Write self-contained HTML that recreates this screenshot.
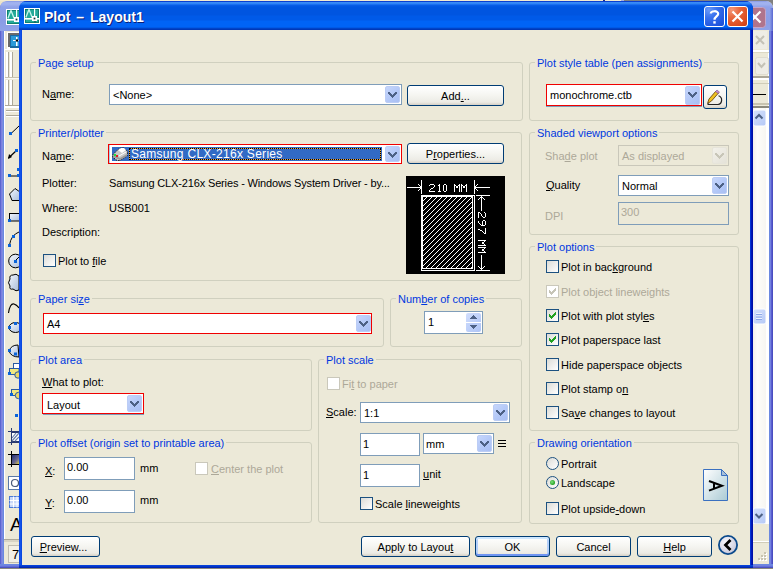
<!DOCTYPE html>
<html><head><meta charset="utf-8">
<style>
*{box-sizing:border-box}
html,body{margin:0;padding:0}
body{width:773px;height:569px;overflow:hidden;position:relative;background:#ede4c8;font-family:"Liberation Sans",sans-serif;font-size:11px;line-height:13px;color:#000}
.a{position:absolute}
.t{position:absolute;white-space:pre;line-height:13px}
.dis{color:#aca899}
.gb{position:absolute;border:1px solid #d0d0bf;border-radius:3px}
.gt{position:absolute;white-space:pre;color:#0038e0;background:#ece9d8;padding:0 2px;line-height:13px}
.combo{position:absolute;background:#fff;border:1px solid #7f9db9}
.combo.red{border:1px solid #f00000}
.dd{position:absolute;top:1px;right:1px;bottom:1px;width:15px;border-radius:2px;background:linear-gradient(135deg,#c6d6fc 0%,#b2c7f7 60%,#a9bff3 100%);border:1px solid #bccdf5}
.dd svg{position:absolute;left:2px;top:5px}
.inp{position:absolute;background:#fff;border:1px solid #7f9db9}
.btn{position:absolute;border:1px solid #003c74;border-radius:3px;background:linear-gradient(#ffffff 0%,#f6f6f2 45%,#ecebe5 85%,#d6d0c5 100%);text-align:center;white-space:pre}
.cb{position:absolute;width:13px;height:13px;border:1px solid #1c5180;background:linear-gradient(135deg,#dcdcd7 0%,#f1f1ef 60%,#fff 100%)}
.cb.dis{border-color:#cac8bb;background:#fff}
.u{text-decoration:underline}
.dd.ddd{background:linear-gradient(135deg,#f2f1ea,#e4e2d8);border-color:#e6e4da}

.rad{position:absolute;width:13px;height:13px;border-radius:50%;border:1px solid #1c5180;background:linear-gradient(135deg,#dcdcd7 0%,#f1f1ef 60%,#fff 100%)}
.rad.on:after{content:"";position:absolute;left:3px;top:3px;width:5px;height:5px;border-radius:50%;background:radial-gradient(circle at 40% 40%,#7ee07e,#21a121 70%)}
.btn.def{box-shadow:inset 0 -2px 0 #6f95f2, inset 0 2px 0 #cee7ff, inset 2px 0 0 #b4d0fa, inset -2px 0 0 #b4d0fa}

</style></head>
<body>
<!-- background app window -->
<div class="a" style="left:0;top:0;width:773px;height:1px;background:linear-gradient(90deg,#f2ead0 0,#f2ead0 603px,#1a2a90 603px,#1a2a90 605px,#f2ead0 605px,#f2ead0 621px,#a8b0e0 621px,#a8b0e0 624px,#808080 624px)"></div>
<div class="a" style="left:624px;top:0;width:149px;height:14px;background:#808080"></div>
<div class="a" style="left:0;top:1px;width:773px;height:567px;border-radius:7px 7px 0 0;background:linear-gradient(90deg,#5a66d0 0,#5a66d0 1px,#7b7fe0 1px,#7b7fe0 2px,#7a8de0 2px,#7a8de0 3px,#6a88e0 3px,#6a88e0 4px,#fff 4px,#fff 5px,#ece9d8 5px)"></div>
<div class="a" style="left:0;top:1px;width:773px;height:30px;border-radius:7px 7px 0 0;background:linear-gradient(#7d8fe0 0,#9fb0ee 1px,#a2b3ef 3px,#90a2e8 6px,#8a9de6 20px,#8fa2e8 29px)"></div>
<div class="a" style="left:768px;top:31px;width:1px;height:533px;background:#fff"></div><div class="a" style="left:770px;top:8px;width:3px;height:23px;background:linear-gradient(90deg,#8a9ce6,#6a7ad8 2px,#5a66d0)"></div><div class="a" style="left:769px;top:31px;width:4px;height:537px;background:linear-gradient(90deg,#6a88e0 0,#6a88e0 1px,#7382e0 1px,#7382e0 2px,#5a5ed0 2px,#5a5ed0 3px,#4a4ec0 3px)"></div>
<div class="a" style="left:0;top:564px;width:773px;height:4px;background:linear-gradient(#6a88e0 0,#6a88e0 1px,#7080e0 1px,#7080e0 2px,#6070d8 2px,#6070d8 3px,#4a50c0 3px)"></div>
<div class="a" style="left:5px;top:31px;width:763px;height:533px;background:#ece9d8"></div><div class="a" style="left:4px;top:31px;width:1px;height:511px;background:#fff"></div>
<div class="a" style="left:0;top:568px;width:773px;height:1px;background:#8a8a80"></div>

<svg class="a" style="left:0;top:0" width="19" height="569" viewBox="0 0 19 569">
<defs>
<linearGradient id="pg" x1="0" y1="0" x2="1" y2="1"><stop offset="0" stop-color="#f4f8ff"/><stop offset="1" stop-color="#a8bcd8"/></linearGradient>
<linearGradient id="gr" x1="0" y1="0" x2="1" y2="1"><stop offset="0" stop-color="#202a70"/><stop offset="0.6" stop-color="#6a6a90"/><stop offset="1" stop-color="#e8d040"/></linearGradient>
</defs>
<!-- bg window title icon -->
<g transform="translate(0,1)"><rect x="6" y="8" width="16" height="16" fill="#fff"/>
<rect x="7" y="9" width="14" height="14" fill="#0f7f70"/>
<rect x="8" y="10" width="12" height="12" fill="#24aa98"/>
<polyline points="7.8,17.5 11,9.5 14.2,17.5" fill="none" stroke="#c8f4ec" stroke-width="1.3"/>
<rect x="16" y="9" width="1.2" height="8.5" fill="#fff"/>
<rect x="7" y="18" width="14" height="1.6" fill="#fff"/>
<rect x="14" y="16" width="5" height="5" fill="#fff"/>
<rect x="15.6" y="17.6" width="1.8" height="1.8" fill="#1a3a3a"/></g>
<!-- toolbar top icon -->
<rect x="7" y="32" width="12" height="17" fill="#fff"/>
<rect x="8" y="33" width="11" height="14" fill="#6a6a6a"/>
<rect x="10" y="35" width="9" height="13" fill="#1a6aa0"/>
<rect x="11" y="36" width="8" height="10" fill="#2a9ad8"/>
<rect x="13" y="40" width="6" height="1" fill="#fff"/>
<rect x="16" y="37" width="1.5" height="9" fill="#fff"/>
<circle cx="17" cy="40.5" r="1.2" fill="#000"/>
<rect x="4" y="49" width="15" height="1" fill="#fff"/>
<!-- grips -->
<g fill="#fff"><rect x="6" y="52" width="2" height="25"/><rect x="10" y="52" width="2" height="25"/><rect x="6" y="80" width="2" height="25"/><rect x="10" y="80" width="2" height="25"/></g>
<g fill="#aca899"><rect x="8" y="52" width="1" height="25"/><rect x="12" y="52" width="1" height="25"/><rect x="8" y="80" width="1" height="25"/><rect x="12" y="80" width="1" height="25"/></g>
<rect x="5" y="77" width="14" height="1" fill="#c8c4b0"/><rect x="5" y="78" width="14" height="1" fill="#f8f8f4"/>
<rect x="5" y="105" width="14" height="1" fill="#aca899"/>
<rect x="5" y="106" width="14" height="2" fill="#fff"/>
<rect x="6" y="110" width="13" height="1" fill="#aca899"/>
<rect x="6" y="111" width="13" height="1" fill="#fff"/>
<rect x="6" y="115" width="13" height="1" fill="#aca899"/>
<rect x="6" y="116" width="13" height="1" fill="#fff"/>
<!-- line -->
<line x1="10.5" y1="134" x2="19" y2="126" stroke="#000" stroke-width="1"/>
<rect x="9" y="132" width="3" height="3" fill="#0a64d8"/>
<!-- ray -->
<line x1="8.5" y1="158" x2="17" y2="150" stroke="#000" stroke-width="1.2"/>
<path d="M8,159 L9,154 L12,157 Z" fill="#000"/>
<rect x="15" y="149" width="3" height="3" fill="#0a64d8"/>
<!-- xline -->
<line x1="9" y1="176" x2="19" y2="176" stroke="#000"/>
<rect x="8" y="174" width="3" height="3" fill="#0a64d8"/>
<rect x="17" y="174" width="3" height="3" fill="#0a64d8"/>
<rect x="17" y="168" width="3" height="3" fill="#0a64d8"/>
<!-- polygon -->
<path d="M9.5,194 L15,188.5 L20,192 L20,200.5 L12,200.5 Z" fill="url(#pg)" stroke="#000"/>
<!-- rectangle -->
<rect x="9.5" y="213.5" width="11" height="7.5" fill="url(#pg)" stroke="#000"/>
<rect x="8" y="219" width="3" height="3" fill="#0a64d8"/>
<!-- arc -->
<path d="M9.5,245 Q11,235 19,232" fill="none" stroke="#000"/>
<rect x="8" y="244" width="3" height="3" fill="#0a64d8"/>
<rect x="12" y="235" width="3" height="3" fill="#0a64d8"/>
<!-- circle -->
<circle cx="15.5" cy="261" r="6.8" fill="url(#pg)" stroke="#000"/>
<line x1="15" y1="261" x2="19" y2="257" stroke="#000"/>
<rect x="14" y="260" width="3" height="3" fill="#0a64d8"/>
<!-- cloud -->
<path d="M10,279 Q9,275 13,275 Q16,273 19,276 L19,290 Q16,292 13,289 Q9,290 10,286 Q7,283 10,279 Z" fill="url(#pg)" stroke="#000"/>
<!-- spline -->
<path d="M8.5,313 Q10,303 14,304 Q17,305 19,308" fill="none" stroke="#000" stroke-width="1.1"/>
<!-- ellipse -->
<ellipse cx="15.5" cy="327.5" rx="6.5" ry="5" fill="url(#pg)" stroke="#000"/>
<rect x="8" y="326" width="3" height="3" fill="#0a64d8"/>
<rect x="14" y="322" width="3" height="3" fill="#0a64d8"/>
<!-- ellipse arc -->
<path d="M9,351 Q11,345 18,345 L19,357 Q11,357 9,351 Z" fill="url(#pg)" stroke="#000"/>
<rect x="8" y="349" width="3" height="3" fill="#0a64d8"/>
<rect x="14" y="352.5" width="3" height="3" fill="#0a64d8"/>
<!-- insert block -->
<rect x="13.5" y="363.5" width="6" height="6" fill="#fff" stroke="#2a5aa0"/>
<path d="M9.5,368.5 L19,368.5 L19,374 L14,374 Z" fill="#e8e070" stroke="#2a5aa0"/>
<rect x="9.5" y="368.5" width="9.5" height="6" fill="#f0e880" stroke="#2a5aa0"/>
<circle cx="18" cy="375" r="3.2" fill="#e8d868" stroke="#2a5aa0"/>
<rect x="8" y="372" width="3" height="3" fill="#0a64d8"/>
<!-- make block -->
<rect x="11.5" y="389.5" width="8" height="6" fill="#f0e880" stroke="#2a5aa0"/>
<circle cx="18.5" cy="395.5" r="3.2" fill="#e8d868" stroke="#2a5aa0"/>
<rect x="10" y="393" width="3" height="3" fill="#0a64d8"/>
<!-- point -->
<rect x="15" y="414" width="3" height="3" fill="#0a64d8"/>
<!-- hatch -->
<rect x="11.5" y="432.5" width="8" height="9" fill="#fff" stroke="#2a3a70"/>
<path d="M12,438 L16,433 M12,441 L19,433 M15,441 L19,437" stroke="#6a80a8" stroke-width="1.2"/>
<line x1="8" y1="431.5" x2="19" y2="431.5" stroke="#2a3a70"/><line x1="8" y1="442.5" x2="19" y2="442.5" stroke="#2a3a70"/>
<line x1="11.5" y1="428" x2="11.5" y2="445" stroke="#2a3a70"/>
<!-- gradient -->
<rect x="11.5" y="455" width="8" height="9" fill="url(#gr)"/>
<line x1="8" y1="454.5" x2="19" y2="454.5" stroke="#000"/><line x1="8" y1="464.5" x2="19" y2="464.5" stroke="#000"/>
<line x1="11.5" y1="451" x2="11.5" y2="467" stroke="#000"/>
<!-- region -->
<rect x="8.5" y="476.5" width="11" height="13" fill="#fff" stroke="#5a7aa8"/>
<circle cx="15" cy="483" r="3.5" fill="none" stroke="#4a5a7a" stroke-width="1.2"/>
<!-- table -->
<rect x="9.5" y="496.5" width="10" height="11" fill="#c8d8f8" stroke="#4a7ad8"/>
<path d="M9.5,500.5 H19 M9.5,504 H19 M13.5,496.5 V507.5 M17,496.5 V507.5" stroke="#fff"/>
<!-- A -->
<text x="10" y="531" font-family="Liberation Sans" font-size="19" fill="#000">A</text>
<!-- status separator -->
<rect x="4" y="539" width="15" height="1" fill="#aca899"/>
<rect x="4" y="540" width="15" height="2" fill="#d8d4c4"/>
<rect x="4" y="542" width="15" height="22" fill="#ece9d8"/>
<rect x="8.5" y="545.5" width="11" height="17" fill="#f2f0e6" stroke="#c0bdb0"/>
<text x="12" y="559" font-family="Liberation Sans" font-size="13" fill="#000">7</text>
</svg>
<svg class="a" style="left:740px;top:0" width="29" height="569" viewBox="740 0 29 569">
<defs>
<linearGradient id="sb" x1="0" y1="0" x2="1" y2="0"><stop offset="0" stop-color="#f3f1ec"/><stop offset="0.3" stop-color="#fefefb"/><stop offset="1" stop-color="#f6f5f0"/></linearGradient>
<linearGradient id="sbb" x1="0" y1="0" x2="1" y2="1"><stop offset="0" stop-color="#d6e2fc"/><stop offset="1" stop-color="#b4c8f6"/></linearGradient>
</defs>
<!-- bg close button -->
<rect x="744.5" y="7.5" width="21" height="20" rx="3" fill="#b0748c" stroke="#c4a4c8"/>
<path d="M749.5,11.5 L760.5,22.5 M760.5,11.5 L749.5,22.5" stroke="#fff" stroke-width="2.2"/>
<!-- toolbar stuff -->
<rect x="753" y="30" width="16" height="20" fill="#ece9d8"/>
<rect x="753" y="31" width="14" height="18" fill="#eeede5"/>
<path d="M756,36 L764,44 M764,36 L756,44" stroke="#c4c2b6" stroke-width="2"/>
<rect x="753" y="50" width="16" height="2" fill="#fff"/>
<rect x="753" y="52" width="16" height="1" fill="#dcd8c4"/>
<rect x="755.5" y="57.5" width="13" height="17" rx="2" fill="#eeede6" stroke="#dedcd0"/>
<path d="M758,63 L761.5,67 L765,63" fill="none" stroke="#c4c2b6" stroke-width="2"/>
<rect x="753" y="76" width="16" height="2" fill="#aca899"/>
<rect x="753" y="78" width="16" height="2" fill="#fff"/>
<rect x="753" y="83" width="16" height="1" fill="#d0ccb8"/>
<rect x="753" y="94" width="13" height="1" fill="#000"/>
<rect x="753" y="103" width="16" height="2" fill="#c8c4b0"/>
<rect x="753" y="106" width="16" height="2" fill="#8c8a7c"/>
<!-- scrollbar -->
<rect x="753" y="108" width="14" height="416" fill="url(#sb)"/>
<rect x="766" y="108" width="3" height="416" fill="#fff"/>
<rect x="753" y="110" width="13" height="16" rx="2" fill="url(#sbb)" stroke="#fff" stroke-width="1"/>
<path d="M755.5,118.5 L759,115 L762.5,118.5" fill="none" stroke="#4d6185" stroke-width="2"/>
<rect x="753" y="309" width="13" height="15" rx="2" fill="url(#sbb)" stroke="#fff" stroke-width="1"/>
<path d="M756,313.5 H762 M756,316 H762 M756,318.5 H762" stroke="#eef2fd" stroke-width="1"/>
<path d="M756,314.5 H762 M756,317 H762 M756,319.5 H762" stroke="#8ca8e8" stroke-width="1"/>
<rect x="753" y="508" width="13" height="16" rx="2" fill="url(#sbb)" stroke="#fff" stroke-width="1"/>
<path d="M755.5,514 L759,517.5 L762.5,514" fill="none" stroke="#4d6185" stroke-width="2"/>
<!-- below -->
<rect x="753" y="524" width="16" height="17" fill="#ece9d8"/>
<rect x="753" y="541" width="16" height="1" fill="#fff"/>
<rect x="753" y="542" width="16" height="1" fill="#d0ccb8"/>
<rect x="753" y="543" width="16" height="21" fill="#ece9d8"/>
<g fill="#fff"><rect x="765" y="553" width="2" height="2"/><rect x="762" y="556" width="2" height="2"/><rect x="765" y="556" width="2" height="2"/><rect x="759" y="559" width="2" height="2"/><rect x="762" y="559" width="2" height="2"/><rect x="765" y="559" width="2" height="2"/></g>
<g fill="#c8c4b0"><rect x="764" y="552" width="2" height="2"/><rect x="761" y="555" width="2" height="2"/><rect x="764" y="555" width="2" height="2"/><rect x="758" y="558" width="2" height="2"/><rect x="761" y="558" width="2" height="2"/><rect x="764" y="558" width="2" height="2"/></g>
</svg>
<!-- dialog frame -->
<div class="a" style="left:19px;top:1px;width:734px;height:567px;border-radius:8px 8px 0 0;background:linear-gradient(90deg,#0a3fd8 0,#1a5cf4 1px,#0a48e0 2px,#0a48e0 731px,#0022c8 732px,#0010a8 733px)"></div>
<div class="a" style="left:19px;top:1px;width:734px;height:29px;border-radius:8px 8px 0 0;background:linear-gradient(#0a3fd0 0,#0a3fd0 1px,#3d8ff5 1px,#2b80f8 3px,#0a5fe8 4px,#0055e0 6px,#0055e0 14px,#005ae8 15px,#005ae8 19px,#0064f6 20px,#0064f6 26px,#0050d8 27px,#0038b8 28px)"></div>
<div class="a" style="left:19px;top:565px;width:734px;height:3px;background:linear-gradient(#0a48e0,#0030c0 2px,#0018a8)"></div>
<div class="a" style="left:22px;top:30px;width:728px;height:535px;background:#ece9d8"></div>

<svg class="a" style="left:24px;top:8px" width="16" height="16" viewBox="0 0 16 16">
<rect x="0" y="0" width="16" height="16" fill="#fff"/>
<rect x="1" y="1" width="14" height="14" fill="#0f7f70"/>
<rect x="2" y="2" width="12" height="12" fill="#24aa98"/>
<polyline points="1.8,9.5 5,1.5 8.2,9.5" fill="none" stroke="#c8f4ec" stroke-width="1.3"/>
<rect x="10" y="1" width="1.2" height="8.5" fill="#fff"/>
<rect x="1" y="10" width="14" height="1.6" fill="#fff"/>
<rect x="8" y="8" width="5" height="5" fill="#fff"/>
<rect x="9.6" y="9.6" width="1.8" height="1.8" fill="#1a3a3a"/>
<rect x="10.5" y="13" width="1" height="1.5" fill="#1a3a3a"/>
</svg>
<div class="a" style="left:704px;top:6px;width:21px;height:21px;border:1px solid #fff;border-radius:3px;background:radial-gradient(circle at 20% 15%,#6a9af8 0,#3a72ee 35%,#2258e0 75%,#1c4cd0 100%)"></div>
<svg class="a" style="left:704px;top:6px" width="21" height="21" viewBox="0 0 21 21"><path d="M6.8,7.6 C6.8,4.6 14.2,4.2 14.2,7.8 C14.2,10.4 10.5,10.6 10.5,13.8" fill="none" stroke="#fff" stroke-width="2.2"/><rect x="9.3" y="15.2" width="2.4" height="2.4" fill="#fff"/></svg>
<div class="a" style="left:727px;top:6px;width:21px;height:21px;border:1px solid #fff;border-radius:3px;background:radial-gradient(circle at 20% 15%,#f4987a 0,#e8683e 35%,#dc4c20 75%,#c83c12 100%)"></div>
<svg class="a" style="left:727px;top:6px" width="21" height="21" viewBox="0 0 21 21"><path d="M5.5,5.5 L15.5,15.5 M15.5,5.5 L5.5,15.5" stroke="#fff" stroke-width="2.2"/></svg>
<div class="t" style="left:44px;top:9px;font-size:14px;font-weight:bold;line-height:16px;color:#fff;word-spacing:2px;text-shadow:1px 1px 0 #0a1e78">Plot – Layout1</div>

<!-- Page setup -->
<div class="gb" style="left:30px;top:62px;width:493px;height:59px"></div>
<div class="gt" style="left:36px;top:57px">Page setup</div>
<div class="t" style="left:42px;top:88px">N<span class="u">a</span>me:</div>
<div class="combo" style="left:109px;top:84px;width:293px;height:21px"><div class="t" style="left:3px;top:4px">&lt;None&gt;</div><div class="dd"><svg width="9" height="6" shape-rendering="crispEdges"><path fill="#4d6185" d="M0 0h2v1h-2zM7 0h2v1h-2zM0 1h3v1h-3zM6 1h3v1h-3zM1 2h3v1h-3zM5 2h3v1h-3zM2 3h5v1h-5zM3 4h3v1h-3zM4 5h1v1h-1z"/></svg></div></div>
<div class="btn" style="left:407px;top:85px;width:97px;height:21px;line-height:21px">Add<span class="u">.</span>..</div>

<!-- Printer/plotter -->
<div class="gb" style="left:30px;top:132px;width:492px;height:149px"></div>
<div class="gt" style="left:36px;top:127px">Printer/plotter</div>
<div class="t" style="left:42px;top:150px">Na<span class="u">m</span>e:</div>
<div class="a" style="left:108px;top:144px;width:294px;height:20px;background:#fff;border:1px solid #f00000">
  <div class="a" style="left:0;top:0;width:1px;height:18px;background:#a8d0e8"></div>
  <div class="a" style="left:3px;top:2px;width:270px;height:14px;background:#316ac5"></div><svg class="a" style="left:3px;top:2px" width="16" height="14" viewBox="112 147 16 14">
<path d="M112.5,155 L118,149.5 L121,148 L124,148 L127.5,151.5 L127.5,155.5 L120,160.5 L117,160.5 L112.5,157 Z" fill="#c8c8c8" stroke="#202020" stroke-width="1" stroke-dasharray="1.5 1"/>
<path d="M118,150 L121,148 L124,148 L126,150 L122,153 Z" fill="#fff"/>
<path d="M113,155 L120,158 L127,154 L127,156 L120,160 L113,157 Z" fill="#9a9a9a"/>
<path d="M119,156 L126,152" stroke="#fff" stroke-width="1"/>
<rect x="114" y="154" width="2" height="2" fill="#20e040"/>
<rect x="116" y="155" width="2" height="2" fill="#e02020"/>
</svg>
  <div class="a" style="left:20px;top:3px;width:252px;height:12px;border:1px solid #e8a038"></div>
  <div class="a" style="left:20px;top:3px;width:252px;height:12px;border:1px dotted #000"></div>
  <div class="t" style="left:22px;top:2px;color:#fff;font-size:12px;line-height:14px;letter-spacing:0.3px">Samsung CLX-216x Series</div>
  <div class="dd" style="top:1px;right:1px;bottom:1px"><svg width="9" height="6" shape-rendering="crispEdges"><path fill="#4d6185" d="M0 0h2v1h-2zM7 0h2v1h-2zM0 1h3v1h-3zM6 1h3v1h-3zM1 2h3v1h-3zM5 2h3v1h-3zM2 3h5v1h-5zM3 4h3v1h-3zM4 5h1v1h-1z"/></svg></div>
</div>
<div class="btn" style="left:407px;top:143px;width:97px;height:21px;line-height:21px">P<span class="u">r</span>operties...</div>
<div class="t" style="left:42px;top:177px">Plotter:</div>
<div class="t" style="left:109px;top:177px;letter-spacing:-0.15px">Samsung CLX-216x Series - Windows System Driver - by...</div>
<div class="t" style="left:42px;top:202px">Where:</div>
<div class="t" style="left:109px;top:202px">USB001</div>
<div class="t" style="left:42px;top:226px">Description:</div>
<div class="cb" style="left:43px;top:254px"></div>
<div class="t" style="left:58px;top:255px">Plot to <span class="u">f</span>ile</div>
<!--PREVIEW--><svg class="a" style="left:406px;top:176px" width="99" height="98" viewBox="406 176 99 98" shape-rendering="crispEdges"><defs><pattern id="hp" x="0" y="0" width="5" height="5" patternUnits="userSpaceOnUse"><path fill="#fff" d="M3 0h1v1h-1zM2 1h1v1h-1zM1 2h1v1h-1zM0 3h1v1h-1zM4 4h1v1h-1z"/></pattern></defs><rect x="406" y="176" width="99" height="98" fill="#000"/><rect x="423" y="197" width="49" height="71" fill="url(#hp)"/><path fill="#fff" d="M421 180h1v1h-1zM474 180h1v1h-1zM421 181h1v1h-1zM474 181h1v1h-1zM421 182h1v1h-1zM474 182h1v1h-1zM421 183h1v1h-1zM474 183h1v1h-1zM418 184h1v1h-1zM421 184h1v1h-1zM430 184h4v1h-4zM439 184h1v1h-1zM444 184h2v1h-2zM454 184h1v1h-1zM459 184h1v1h-1zM461 184h1v1h-1zM466 184h1v1h-1zM474 184h1v1h-1zM477 184h1v1h-1zM419 185h1v1h-1zM421 185h1v1h-1zM429 185h1v1h-1zM434 185h1v1h-1zM438 185h2v1h-2zM443 185h1v1h-1zM446 185h1v1h-1zM454 185h2v1h-2zM458 185h2v1h-2zM461 185h2v1h-2zM465 185h2v1h-2zM474 185h1v1h-1zM476 185h1v1h-1zM420 186h2v1h-2zM434 186h1v1h-1zM439 186h1v1h-1zM443 186h1v1h-1zM446 186h1v1h-1zM454 186h1v1h-1zM456 186h2v1h-2zM459 186h1v1h-1zM461 186h1v1h-1zM463 186h2v1h-2zM466 186h1v1h-1zM474 186h2v1h-2zM407 187h15v1h-15zM433 187h1v1h-1zM439 187h1v1h-1zM443 187h1v1h-1zM446 187h1v1h-1zM454 187h1v1h-1zM456 187h2v1h-2zM459 187h1v1h-1zM461 187h1v1h-1zM463 187h2v1h-2zM466 187h1v1h-1zM474 187h16v1h-16zM420 188h2v1h-2zM431 188h2v1h-2zM439 188h1v1h-1zM443 188h1v1h-1zM446 188h1v1h-1zM454 188h1v1h-1zM459 188h1v1h-1zM461 188h1v1h-1zM466 188h1v1h-1zM474 188h2v1h-2zM419 189h1v1h-1zM421 189h1v1h-1zM430 189h1v1h-1zM439 189h1v1h-1zM443 189h1v1h-1zM446 189h1v1h-1zM454 189h1v1h-1zM459 189h1v1h-1zM461 189h1v1h-1zM466 189h1v1h-1zM474 189h1v1h-1zM476 189h1v1h-1zM418 190h1v1h-1zM421 190h1v1h-1zM429 190h1v1h-1zM439 190h1v1h-1zM443 190h1v1h-1zM446 190h1v1h-1zM454 190h1v1h-1zM459 190h1v1h-1zM461 190h1v1h-1zM466 190h1v1h-1zM474 190h1v1h-1zM477 190h1v1h-1zM421 191h1v1h-1zM429 191h6v1h-6zM438 191h3v1h-3zM444 191h2v1h-2zM454 191h1v1h-1zM459 191h1v1h-1zM461 191h1v1h-1zM466 191h1v1h-1zM474 191h1v1h-1zM421 192h1v1h-1zM474 192h1v1h-1zM421 193h1v1h-1zM474 193h1v1h-1zM421 195h54v1h-54zM476 195h14v1h-14zM421 196h52v1h-52zM474 196h1v1h-1zM481 196h1v1h-1zM421 197h2v1h-2zM472 197h1v1h-1zM474 197h1v1h-1zM480 197h3v1h-3zM421 198h2v1h-2zM472 198h1v1h-1zM474 198h1v1h-1zM479 198h1v1h-1zM481 198h1v1h-1zM483 198h1v1h-1zM421 199h2v1h-2zM472 199h1v1h-1zM474 199h1v1h-1zM478 199h1v1h-1zM481 199h1v1h-1zM484 199h1v1h-1zM421 200h2v1h-2zM472 200h1v1h-1zM474 200h1v1h-1zM481 200h1v1h-1zM421 201h2v1h-2zM472 201h1v1h-1zM474 201h1v1h-1zM481 201h1v1h-1zM421 202h2v1h-2zM472 202h1v1h-1zM474 202h1v1h-1zM481 202h1v1h-1zM421 203h2v1h-2zM472 203h1v1h-1zM474 203h1v1h-1zM481 203h1v1h-1zM421 204h2v1h-2zM472 204h1v1h-1zM474 204h1v1h-1zM481 204h1v1h-1zM421 205h2v1h-2zM472 205h1v1h-1zM474 205h1v1h-1zM481 205h1v1h-1zM421 206h2v1h-2zM472 206h1v1h-1zM474 206h1v1h-1zM481 206h1v1h-1zM421 207h2v1h-2zM472 207h1v1h-1zM474 207h1v1h-1zM481 207h1v1h-1zM421 208h2v1h-2zM472 208h1v1h-1zM474 208h1v1h-1zM481 208h1v1h-1zM421 209h2v1h-2zM472 209h1v1h-1zM474 209h1v1h-1zM481 209h1v1h-1zM421 210h2v1h-2zM472 210h1v1h-1zM474 210h1v1h-1zM481 210h1v1h-1zM421 211h2v1h-2zM472 211h1v1h-1zM474 211h1v1h-1zM421 212h2v1h-2zM472 212h1v1h-1zM474 212h1v1h-1zM478 212h2v1h-2zM484 212h1v1h-1zM421 213h2v1h-2zM472 213h1v1h-1zM474 213h1v1h-1zM478 213h1v1h-1zM480 213h1v1h-1zM485 213h1v1h-1zM421 214h2v1h-2zM472 214h1v1h-1zM474 214h1v1h-1zM478 214h1v1h-1zM481 214h1v1h-1zM485 214h1v1h-1zM421 215h2v1h-2zM472 215h1v1h-1zM474 215h1v1h-1zM478 215h1v1h-1zM481 215h1v1h-1zM485 215h1v1h-1zM421 216h2v1h-2zM472 216h1v1h-1zM474 216h1v1h-1zM478 216h1v1h-1zM482 216h1v1h-1zM485 216h1v1h-1zM421 217h2v1h-2zM472 217h1v1h-1zM474 217h1v1h-1zM478 217h1v1h-1zM483 217h2v1h-2zM421 218h2v1h-2zM472 218h1v1h-1zM474 218h1v1h-1zM421 219h2v1h-2zM472 219h1v1h-1zM474 219h1v1h-1zM421 220h2v1h-2zM472 220h1v1h-1zM474 220h1v1h-1zM483 220h2v1h-2zM421 221h2v1h-2zM472 221h1v1h-1zM474 221h1v1h-1zM478 221h1v1h-1zM482 221h1v1h-1zM485 221h1v1h-1zM421 222h2v1h-2zM472 222h1v1h-1zM474 222h1v1h-1zM478 222h1v1h-1zM482 222h1v1h-1zM485 222h1v1h-1zM421 223h2v1h-2zM472 223h1v1h-1zM474 223h1v1h-1zM479 223h1v1h-1zM482 223h1v1h-1zM485 223h1v1h-1zM421 224h2v1h-2zM472 224h1v1h-1zM474 224h1v1h-1zM480 224h1v1h-1zM482 224h1v1h-1zM485 224h1v1h-1zM421 225h2v1h-2zM472 225h1v1h-1zM474 225h1v1h-1zM481 225h4v1h-4zM421 226h2v1h-2zM472 226h1v1h-1zM474 226h1v1h-1zM421 227h2v1h-2zM472 227h1v1h-1zM474 227h1v1h-1zM421 228h2v1h-2zM472 228h1v1h-1zM474 228h1v1h-1zM485 228h1v1h-1zM421 229h2v1h-2zM472 229h1v1h-1zM474 229h1v1h-1zM478 229h2v1h-2zM485 229h1v1h-1zM421 230h2v1h-2zM472 230h1v1h-1zM474 230h1v1h-1zM480 230h2v1h-2zM485 230h1v1h-1zM421 231h2v1h-2zM472 231h1v1h-1zM474 231h1v1h-1zM482 231h1v1h-1zM485 231h1v1h-1zM421 232h2v1h-2zM472 232h1v1h-1zM474 232h1v1h-1zM483 232h1v1h-1zM485 232h1v1h-1zM421 233h2v1h-2zM472 233h1v1h-1zM474 233h1v1h-1zM484 233h2v1h-2zM421 234h2v1h-2zM472 234h1v1h-1zM474 234h1v1h-1zM421 235h2v1h-2zM472 235h1v1h-1zM474 235h1v1h-1zM421 236h2v1h-2zM472 236h1v1h-1zM474 236h1v1h-1zM421 237h2v1h-2zM472 237h1v1h-1zM474 237h1v1h-1zM421 238h2v1h-2zM472 238h1v1h-1zM474 238h1v1h-1zM421 239h2v1h-2zM472 239h1v1h-1zM474 239h1v1h-1zM421 240h2v1h-2zM472 240h1v1h-1zM474 240h1v1h-1zM478 240h8v1h-8zM421 241h2v1h-2zM472 241h1v1h-1zM474 241h1v1h-1zM484 241h1v1h-1zM421 242h2v1h-2zM472 242h1v1h-1zM474 242h1v1h-1zM482 242h2v1h-2zM421 243h2v1h-2zM472 243h1v1h-1zM474 243h1v1h-1zM482 243h2v1h-2zM421 244h2v1h-2zM472 244h1v1h-1zM474 244h1v1h-1zM484 244h1v1h-1zM421 245h2v1h-2zM472 245h1v1h-1zM474 245h1v1h-1zM478 245h8v1h-8zM421 246h2v1h-2zM472 246h1v1h-1zM474 246h1v1h-1zM421 247h2v1h-2zM472 247h1v1h-1zM474 247h1v1h-1zM478 247h8v1h-8zM421 248h2v1h-2zM472 248h1v1h-1zM474 248h1v1h-1zM484 248h1v1h-1zM421 249h2v1h-2zM472 249h1v1h-1zM474 249h1v1h-1zM482 249h2v1h-2zM421 250h2v1h-2zM472 250h1v1h-1zM474 250h1v1h-1zM482 250h2v1h-2zM421 251h2v1h-2zM472 251h1v1h-1zM474 251h1v1h-1zM484 251h1v1h-1zM421 252h2v1h-2zM472 252h1v1h-1zM474 252h1v1h-1zM478 252h8v1h-8zM421 253h2v1h-2zM472 253h1v1h-1zM474 253h1v1h-1zM421 254h2v1h-2zM472 254h1v1h-1zM474 254h1v1h-1zM421 255h2v1h-2zM472 255h1v1h-1zM474 255h1v1h-1zM481 255h1v1h-1zM421 256h2v1h-2zM472 256h1v1h-1zM474 256h1v1h-1zM481 256h1v1h-1zM421 257h2v1h-2zM472 257h1v1h-1zM474 257h1v1h-1zM481 257h1v1h-1zM421 258h2v1h-2zM472 258h1v1h-1zM474 258h1v1h-1zM481 258h1v1h-1zM421 259h2v1h-2zM472 259h1v1h-1zM474 259h1v1h-1zM481 259h1v1h-1zM421 260h2v1h-2zM472 260h1v1h-1zM474 260h1v1h-1zM481 260h1v1h-1zM421 261h2v1h-2zM472 261h1v1h-1zM474 261h1v1h-1zM481 261h1v1h-1zM421 262h2v1h-2zM472 262h1v1h-1zM474 262h1v1h-1zM481 262h1v1h-1zM421 263h2v1h-2zM472 263h1v1h-1zM474 263h1v1h-1zM481 263h1v1h-1zM421 264h2v1h-2zM472 264h1v1h-1zM474 264h1v1h-1zM481 264h1v1h-1zM421 265h2v1h-2zM472 265h1v1h-1zM474 265h1v1h-1zM481 265h1v1h-1zM421 266h2v1h-2zM472 266h1v1h-1zM474 266h1v1h-1zM478 266h1v1h-1zM481 266h1v1h-1zM484 266h1v1h-1zM421 267h2v1h-2zM472 267h1v1h-1zM474 267h1v1h-1zM479 267h1v1h-1zM481 267h1v1h-1zM483 267h1v1h-1zM421 268h52v1h-52zM474 268h1v1h-1zM480 268h3v1h-3zM421 269h1v1h-1zM474 269h1v1h-1zM481 269h1v1h-1zM421 270h54v1h-54zM476 270h14v1h-14z"/></svg><!--/PREVIEW-->

<!-- Paper size -->
<div class="gb" style="left:30px;top:298px;width:354px;height:49px"></div>
<div class="gt" style="left:36px;top:293px">Paper si<span class="u">z</span>e</div>
<div class="combo red" style="left:43px;top:313px;width:329px;height:21px"><div class="t" style="left:3px;top:4px">A4</div><div class="dd" style="right:0"><svg width="9" height="6" shape-rendering="crispEdges"><path fill="#4d6185" d="M0 0h2v1h-2zM7 0h2v1h-2zM0 1h3v1h-3zM6 1h3v1h-3zM1 2h3v1h-3zM5 2h3v1h-3zM2 3h5v1h-5zM3 4h3v1h-3zM4 5h1v1h-1z"/></svg></div></div>

<!-- Number of copies -->
<div class="gb" style="left:390px;top:298px;width:132px;height:49px"></div>
<div class="gt" style="left:396px;top:293px">Num<span class="u">b</span>er of copies</div>
<div class="inp" style="left:424px;top:311px;width:59px;height:23px"><div class="t" style="left:3px;top:4px">1</div></div><div class="a" style="left:466px;top:313px;width:15px;height:9px;border-radius:2px 2px 0 0;background:linear-gradient(135deg,#d2defc,#b6caf7)"></div>
<div class="a" style="left:466px;top:323px;width:15px;height:9px;border-radius:0 0 2px 2px;background:linear-gradient(135deg,#c6d6fb,#aec4f5)"></div>
<svg class="a" style="left:466px;top:313px" width="15" height="19" shape-rendering="crispEdges"><path fill="#4d6185" d="M7 2h1v1h-1zM6 3h3v1h-3zM5 4h5v1h-5zM4 5h7v1h-7zM4 12h7v1h-7zM5 13h5v1h-5zM6 14h3v1h-3zM7 15h1v1h-1z"/></svg>

<!-- Plot area -->
<div class="gb" style="left:30px;top:359px;width:282px;height:72px"></div>
<div class="gt" style="left:36px;top:354px">Plot area</div>
<div class="t" style="left:42px;top:376px"><span class="u">W</span>hat to plot:</div>
<div class="a" style="left:43px;top:394px;width:1px;height:21px;background:#a8d0f0"></div><div class="a" style="left:43px;top:414px;width:101px;height:1px;background:#7f9db9"></div><div class="combo red" style="left:42px;top:393px;width:102px;height:21px"><div class="t" style="left:4px;top:5px">Layout</div><div class="dd"><svg width="9" height="6" shape-rendering="crispEdges"><path fill="#4d6185" d="M0 0h2v1h-2zM7 0h2v1h-2zM0 1h3v1h-3zM6 1h3v1h-3zM1 2h3v1h-3zM5 2h3v1h-3zM2 3h5v1h-5zM3 4h3v1h-3zM4 5h1v1h-1z"/></svg></div></div>

<!-- Plot offset -->
<div class="gb" style="left:30px;top:442px;width:282px;height:81px"></div>
<div class="gt" style="left:36px;top:437px">Plot offset (origin set to printable area)</div>
<div class="t" style="left:45px;top:465px"><span class="u">X</span>:</div>
<div class="inp" style="left:64px;top:457px;width:71px;height:23px"><div class="t" style="left:2px;top:3px">0.00</div></div>
<div class="t" style="left:140px;top:462px">mm</div>
<div class="t" style="left:45px;top:497px"><span class="u">Y</span>:</div>
<div class="inp" style="left:64px;top:490px;width:71px;height:23px"><div class="t" style="left:2px;top:3px">0.00</div></div>
<div class="t" style="left:140px;top:494px">mm</div>
<div class="cb dis" style="left:195px;top:462px"></div>
<div class="t dis" style="left:211px;top:463px"><span class="u">C</span>enter the plot</div>

<!-- Plot scale -->
<div class="gb" style="left:318px;top:359px;width:204px;height:164px"></div>
<div class="gt" style="left:324px;top:354px">Plot scale</div>
<div class="cb dis" style="left:327px;top:377px"></div>
<div class="t dis" style="left:342px;top:378px">Fi<span class="u">t</span> to paper</div>
<div class="t" style="left:326px;top:406px"><span class="u">S</span>cale:</div>
<div class="combo" style="left:360px;top:402px;width:150px;height:21px"><div class="t" style="left:3px;top:4px">1:1</div><div class="dd"><svg width="9" height="6" shape-rendering="crispEdges"><path fill="#4d6185" d="M0 0h2v1h-2zM7 0h2v1h-2zM0 1h3v1h-3zM6 1h3v1h-3zM1 2h3v1h-3zM5 2h3v1h-3zM2 3h5v1h-5zM3 4h3v1h-3zM4 5h1v1h-1z"/></svg></div></div>
<div class="inp" style="left:360px;top:433px;width:60px;height:23px"><div class="t" style="left:2px;top:4px">1</div></div>
<div class="combo" style="left:423px;top:433px;width:71px;height:21px"><div class="t" style="left:2px;top:4px">mm</div><div class="dd"><svg width="9" height="6" shape-rendering="crispEdges"><path fill="#4d6185" d="M0 0h2v1h-2zM7 0h2v1h-2zM0 1h3v1h-3zM6 1h3v1h-3zM1 2h3v1h-3zM5 2h3v1h-3zM2 3h5v1h-5zM3 4h3v1h-3zM4 5h1v1h-1z"/></svg></div></div>
<div class="a" style="left:498px;top:440px;width:8px;height:1px;background:#000;box-shadow:0 3px 0 #000,0 6px 0 #000"></div>
<div class="inp" style="left:360px;top:464px;width:60px;height:23px"><div class="t" style="left:2px;top:4px">1</div></div>
<div class="t" style="left:423px;top:468px"><span class="u">u</span>nit</div>
<div class="cb" style="left:360px;top:497px"></div>
<div class="t" style="left:375px;top:498px">Scale <span class="u">l</span>ineweights</div>

<!-- Plot style table -->
<div class="gb" style="left:529px;top:62px;width:210px;height:59px"></div>
<div class="gt" style="left:535px;top:57px">Plot style table (pen assignments)</div>
<div class="a" style="left:546px;top:106px;width:156px;height:1px;background:#7f9db9"></div><div class="combo red" style="left:546px;top:84px;width:156px;height:22px"><div class="t" style="left:3px;top:4px">monochrome.ctb</div><div class="dd" style="bottom:0"><svg width="9" height="6" shape-rendering="crispEdges"><path fill="#4d6185" d="M0 0h2v1h-2zM7 0h2v1h-2zM0 1h3v1h-3zM6 1h3v1h-3zM1 2h3v1h-3zM5 2h3v1h-3zM2 3h5v1h-5zM3 4h3v1h-3zM4 5h1v1h-1z"/></svg></div></div>
<div class="btn" style="left:703px;top:85px;width:24px;height:24px"></div><svg class="a" style="left:703px;top:85px" width="24" height="24" viewBox="703 85 24 24">
<path d="M707.5,104.5 L718,104.5 A4.5,4.5 0 0 0 718.5,95.8" fill="none" stroke="#222" stroke-width="1.2"/>
<path d="M707.5,103.5 L709,99 L716,91 L718.5,93 L711.5,101 Z" fill="#f0c020" stroke="#6a4a10" stroke-width="0.9"/>
<path d="M715.5,91.5 L717,90 L719.5,92.2 L718,93.5 Z" fill="#c890d0" stroke="#8a5a90" stroke-width="0.7"/>
<path d="M708.5,102.5 L707.5,104 L709.3,103.3 Z" fill="#222"/>
</svg>

<!-- Shaded viewport options -->
<div class="gb" style="left:529px;top:132px;width:210px;height:103px"></div>
<div class="gt" style="left:535px;top:127px">Shaded viewport options</div>
<div class="t dis" style="left:545px;top:150px">Sha<span class="u">d</span>e plot</div>
<div class="combo" style="left:618px;top:145px;width:111px;height:21px;background:#ece9d8;border-color:#c9c7ba"><div class="t dis" style="left:3px;top:4px">As displayed</div><div class="dd ddd"><svg width="9" height="6" shape-rendering="crispEdges"><path fill="#c8c6b8" d="M0 0h2v1h-2zM7 0h2v1h-2zM0 1h3v1h-3zM6 1h3v1h-3zM1 2h3v1h-3zM5 2h3v1h-3zM2 3h5v1h-5zM3 4h3v1h-3zM4 5h1v1h-1z"/></svg></div></div>
<div class="t" style="left:546px;top:179px"><span class="u">Q</span>uality</div>
<div class="combo" style="left:618px;top:175px;width:111px;height:21px"><div class="t" style="left:3px;top:4px">Normal</div><div class="dd"><svg width="9" height="6" shape-rendering="crispEdges"><path fill="#4d6185" d="M0 0h2v1h-2zM7 0h2v1h-2zM0 1h3v1h-3zM6 1h3v1h-3zM1 2h3v1h-3zM5 2h3v1h-3zM2 3h5v1h-5zM3 4h3v1h-3zM4 5h1v1h-1z"/></svg></div></div>
<div class="t dis" style="left:545px;top:210px">DPI</div>
<div class="inp" style="left:618px;top:202px;width:111px;height:23px;background:#ece9d8"><div class="t dis" style="left:2px;top:3px">300</div></div>

<!-- Plot options -->
<div class="gb" style="left:529px;top:246px;width:210px;height:185px"></div>
<div class="gt" style="left:535px;top:241px">Plot options</div>
<div class="cb" style="left:546px;top:260px"></div><div class="t" style="left:561px;top:261px">Plot in bac<span class="u">k</span>ground</div>
<div class="cb dis" style="left:546px;top:285px"></div><svg class="a" style="left:546px;top:285px" width="13" height="13" shape-rendering="crispEdges"><path fill="#c6c4b6" d="M9 3h1v1h-1zM8 4h2v1h-2zM3 5h1v1h-1zM7 5h3v1h-3zM3 6h2v1h-2zM6 6h3v1h-3zM3 7h5v1h-5zM4 8h3v1h-3zM5 9h1v1h-1z"/></svg><div class="t dis" style="left:561px;top:286px">Plot object lineweights</div>
<div class="cb" style="left:546px;top:309px"></div><svg class="a" style="left:546px;top:309px" width="13" height="13" shape-rendering="crispEdges"><path fill="#21a121" d="M9 3h1v1h-1zM8 4h2v1h-2zM3 5h1v1h-1zM7 5h3v1h-3zM3 6h2v1h-2zM6 6h3v1h-3zM3 7h5v1h-5zM4 8h3v1h-3zM5 9h1v1h-1z"/></svg><div class="t" style="left:561px;top:310px">Plot with plot styl<span class="u">e</span>s</div>
<div class="cb" style="left:546px;top:333px"></div><svg class="a" style="left:546px;top:333px" width="13" height="13" shape-rendering="crispEdges"><path fill="#21a121" d="M9 3h1v1h-1zM8 4h2v1h-2zM3 5h1v1h-1zM7 5h3v1h-3zM3 6h2v1h-2zM6 6h3v1h-3zM3 7h5v1h-5zM4 8h3v1h-3zM5 9h1v1h-1z"/></svg><div class="t" style="left:561px;top:334px">Plot paperspace last</div>
<div class="cb" style="left:546px;top:358px"></div><div class="t" style="left:561px;top:359px">Hide paperspace ob<span class="u">j</span>ects</div>
<div class="cb" style="left:546px;top:382px"></div><div class="t" style="left:561px;top:383px">Plot stamp o<span class="u">n</span></div>
<div class="cb" style="left:546px;top:406px"></div><div class="t" style="left:561px;top:407px">Sa<span class="u">v</span>e changes to layout</div>

<!-- Drawing orientation -->
<div class="gb" style="left:529px;top:442px;width:210px;height:82px"></div>
<div class="gt" style="left:535px;top:437px">Drawing orientation</div>
<div class="rad" style="left:546px;top:457px"></div><div class="t" style="left:561px;top:458px">Portrait</div>
<div class="rad on" style="left:546px;top:476px"></div><div class="t" style="left:561px;top:477px">Landscape</div>
<div class="cb" style="left:546px;top:502px"></div><div class="t" style="left:561px;top:503px">Plot upside<span class="u">-</span>down</div>

<!-- bottom buttons -->
<div class="btn" style="left:31px;top:536px;width:69px;height:21px;line-height:21px;padding-right:4px"><span class="u">P</span>review...</div>
<div class="btn" style="left:361px;top:536px;width:109px;height:21px;line-height:21px">Apply to Layou<span class="u">t</span></div>
<div class="btn def" style="left:475px;top:536px;width:75px;height:21px;line-height:21px">OK</div>
<div class="btn" style="left:556px;top:536px;width:75px;height:21px;line-height:21px">Cancel</div>
<div class="btn" style="left:637px;top:536px;width:75px;height:21px;line-height:21px"><span class="u">H</span>elp</div>
<svg class="a" style="left:703px;top:469px" width="25" height="32" viewBox="0 0 25 32">
<defs><linearGradient id="pap" x1="0" y1="0" x2="1" y2="1"><stop offset="0" stop-color="#ffffff"/><stop offset="1" stop-color="#aacad4"/></linearGradient></defs>
<path d="M0.5,0.5 L18.5,0.5 L24.5,6.5 L24.5,31.5 L0.5,31.5 Z" fill="url(#pap)" stroke="#3a70c0"/>
<path d="M18.5,0.5 L18.5,6.5 L24.5,6.5 Z" fill="#a8c0d8" stroke="#3a70c0"/>
<path d="M6,12 L19,16.8 L6,21.6 M11,13.9 L11,19.7" fill="none" stroke="#000" stroke-width="2"/>
</svg>
<svg class="a" style="left:718px;top:535px" width="20" height="20" viewBox="0 0 20 20">
<defs><radialGradient id="cg" cx="0.4" cy="0.35" r="0.7"><stop offset="0" stop-color="#fafaff"/><stop offset="1" stop-color="#c4c4d8"/></radialGradient></defs>
<circle cx="10" cy="10" r="9.1" fill="url(#cg)" stroke="#0b4a8c" stroke-width="1.8"/>
<path d="M12.5,5 L7.5,10 L12.5,15" fill="none" stroke="#000" stroke-width="2.8"/>
</svg>

</body></html>
